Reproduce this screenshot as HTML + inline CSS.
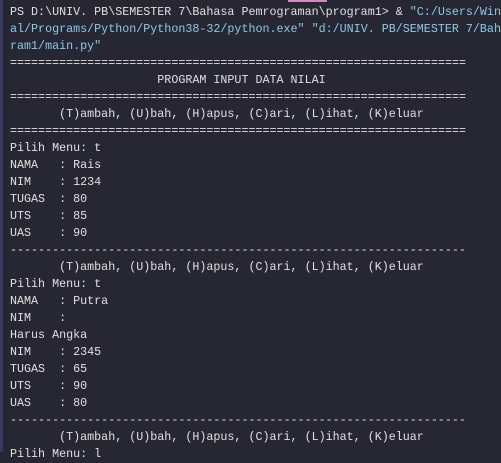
<!DOCTYPE html>
<html><head><style>
html,body{margin:0;padding:0;}
body{width:501px;height:452px;overflow:hidden;background:#262732;position:relative;}
.bar{position:absolute;left:0;top:0;width:3px;height:452px;background:#3a3966;}
.pink{position:absolute;left:288px;top:0;width:39px;height:2px;background:#d08ac0;}
pre{position:absolute;left:10px;top:4px;margin:0;font-family:"Liberation Mono",monospace;font-size:11.7px;line-height:17px;color:#e0e0e0;white-space:pre;}
.s{color:#8ec8e8;}
</style></head><body>
<div class="bar"></div><div class="pink"></div>
<pre>PS D:\UNIV. PB\SEMESTER 7\Bahasa Pemrograman\program1&gt; &amp; <span class="s">"C:/Users/Win</span>
<span class="s">al/Programs/Python/Python38-32/python.exe"</span> <span class="s">"d:/UNIV. PB/SEMESTER 7/Bah</span>
<span class="s">ram1/main.py"</span>
=================================================================
                     PROGRAM INPUT DATA NILAI
=================================================================
       (T)ambah, (U)bah, (H)apus, (C)ari, (L)ihat, (K)eluar
=================================================================
Pilih Menu: t
NAMA   : Rais
NIM    : 1234
TUGAS  : 80
UTS    : 85
UAS    : 90
-----------------------------------------------------------------
       (T)ambah, (U)bah, (H)apus, (C)ari, (L)ihat, (K)eluar
Pilih Menu: t
NAMA   : Putra
NIM    :
Harus Angka
NIM    : 2345
TUGAS  : 65
UTS    : 90
UAS    : 80
-----------------------------------------------------------------
       (T)ambah, (U)bah, (H)apus, (C)ari, (L)ihat, (K)eluar
Pilih Menu: l</pre>
</body></html>
